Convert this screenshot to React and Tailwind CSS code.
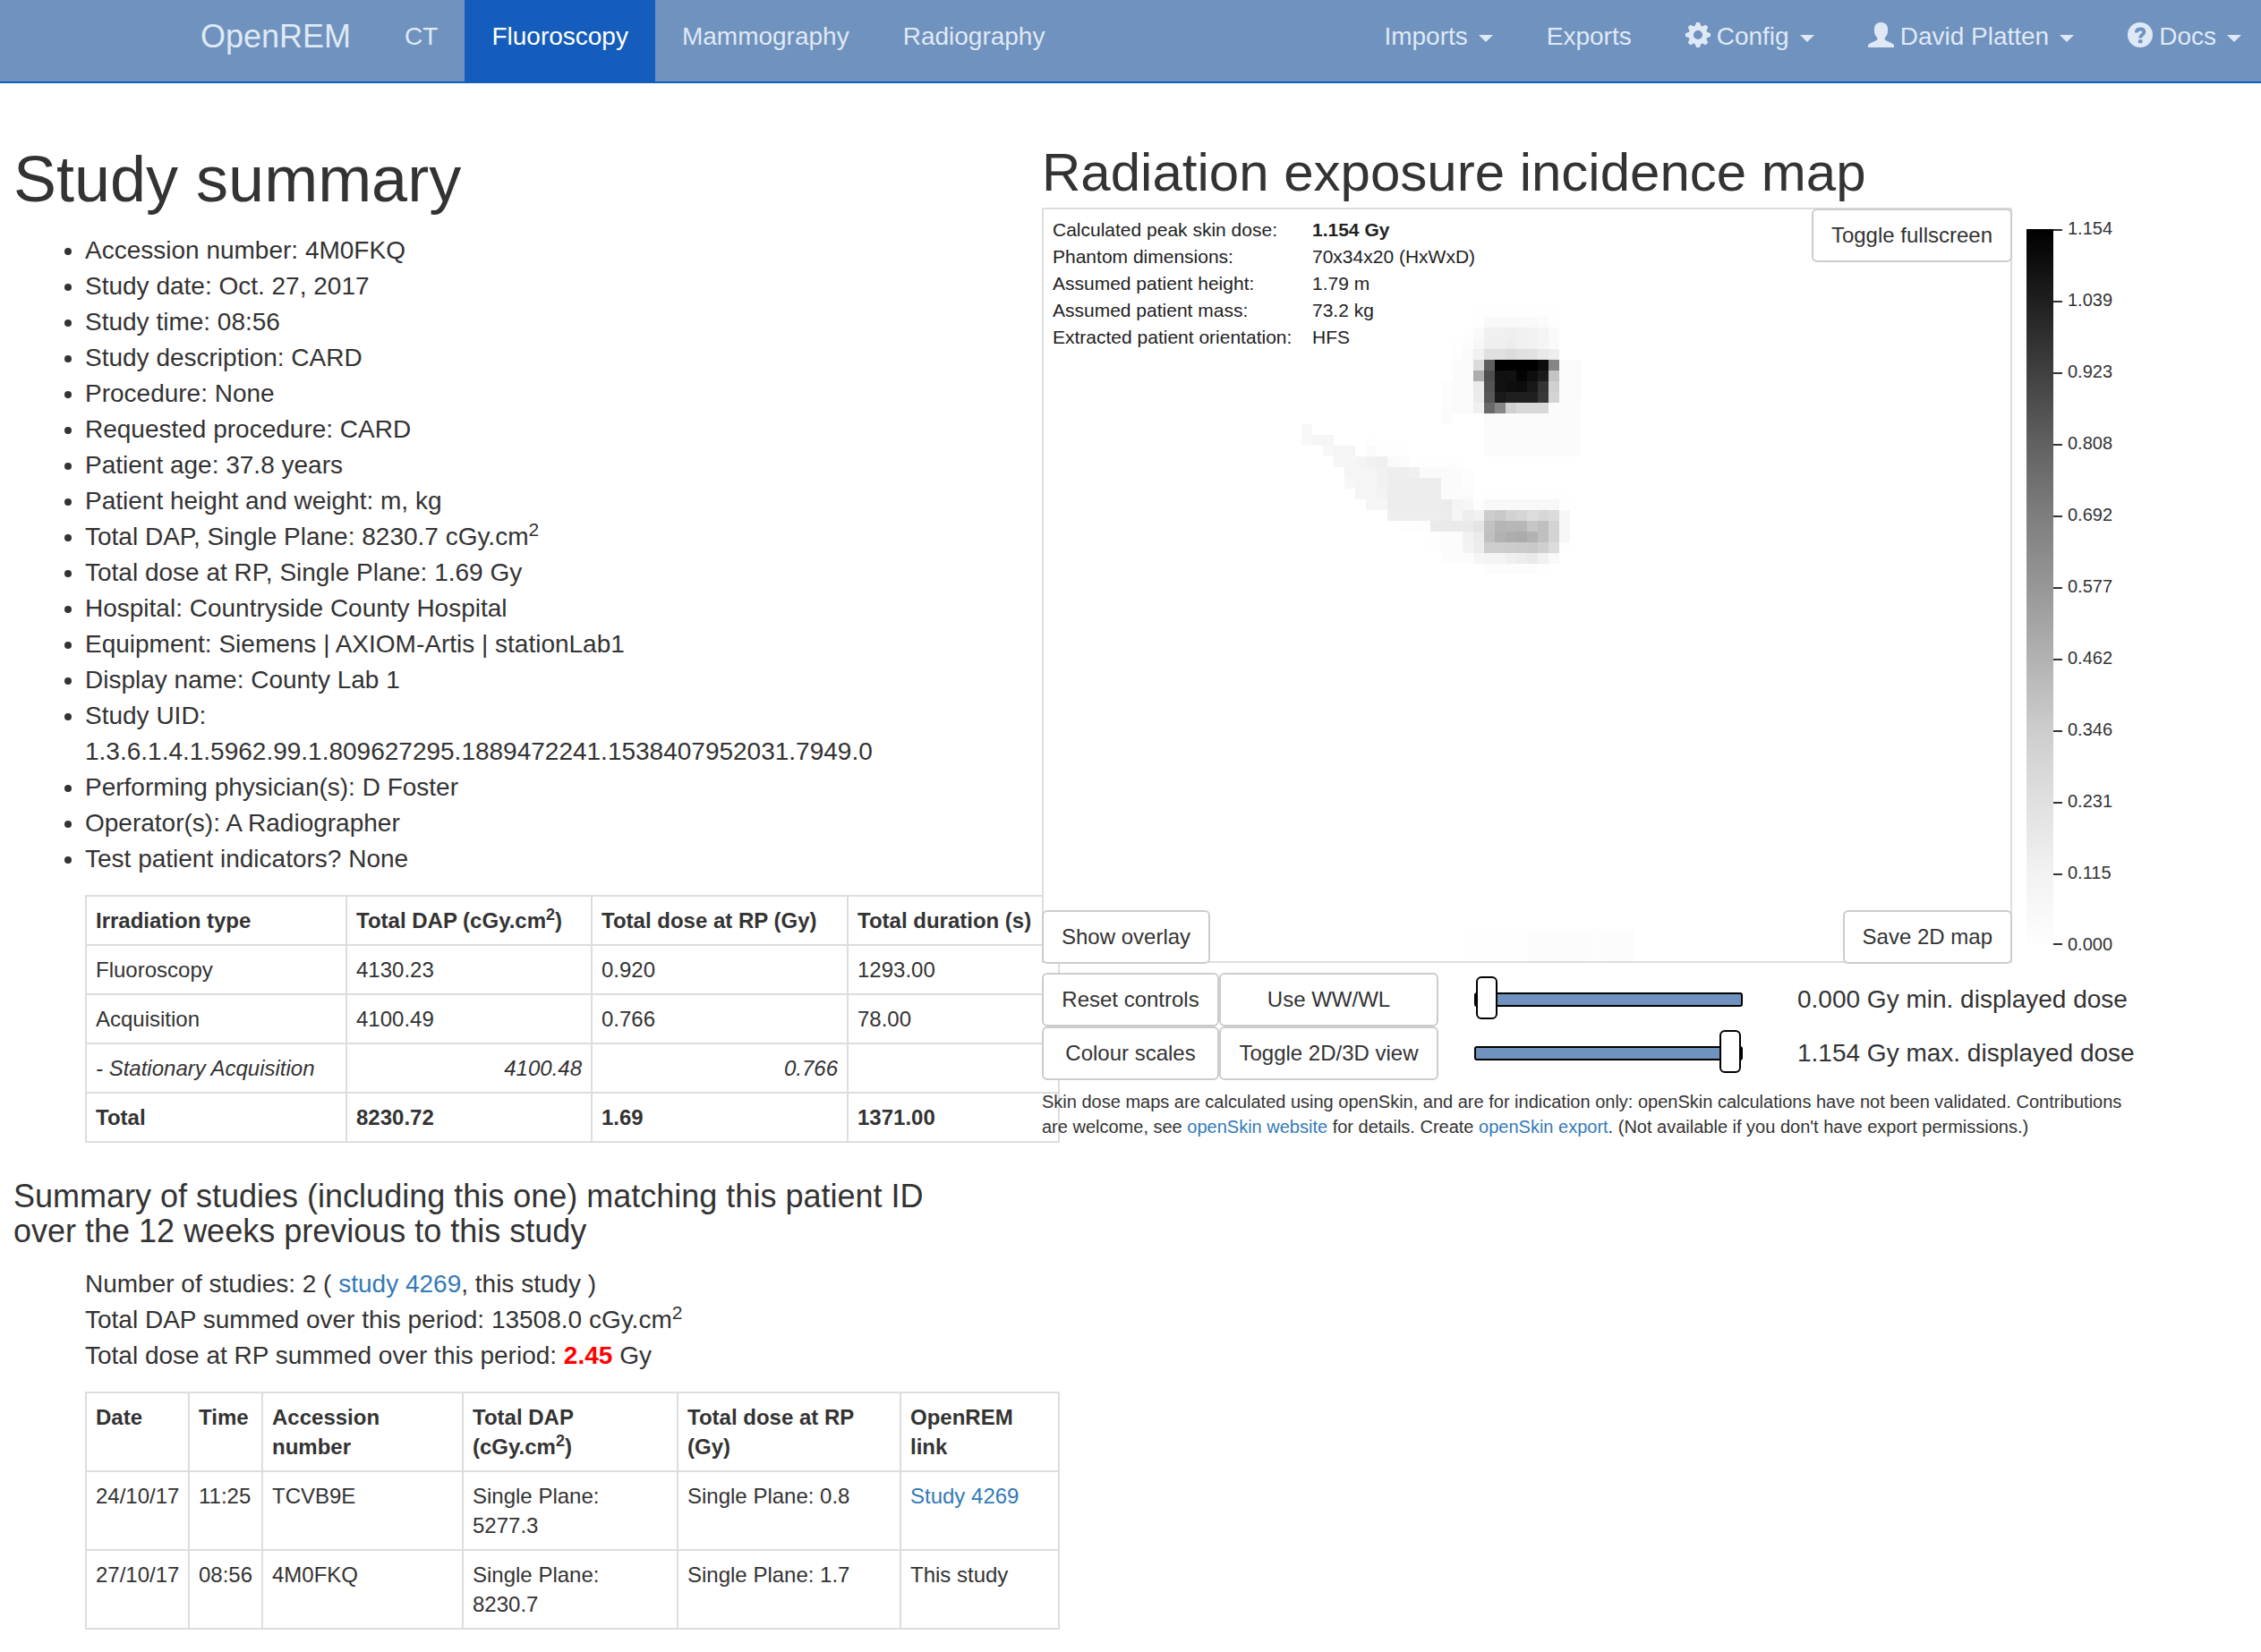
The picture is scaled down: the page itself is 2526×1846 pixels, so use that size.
import React, { useState } from "react";

const IRRADIATION_ROWS = [
  ["Fluoroscopy", "4130.23", "0.920", "1293.00"],
  ["Acquisition", "4100.49", "0.766", "78.00"],
];

const SCALE_TICKS = ["1.154", "1.039", "0.923", "0.808", "0.692", "0.577", "0.462", "0.346", "0.231", "0.115", "0.000"];
const SCALE_GREYS = ["#000000", "#1f1f1f", "#404040", "#616161", "#7e7e7e", "#979797", "#b2b2b2", "#cdcdcd", "#e0e0e0", "#f2f2f2", "#fefefe"];

// Dose cells of the skin map: row, first column, then one grey level per cell.
const DOSE_CELLS = [
  [9, 40, "fe fe fe fe fe fe fe fe"],
  [10, 40, "fe f9 f9 f9 f9 f9 fb fe"],
  [11, 39, "fe fa f0 f0 ef f0 f2 f4 fa"],
  [12, 38, "fe fd f7 ef ef ed f0 f2 f5 fa"],
  [13, 38, "fe fa f1 e0 e0 db e0 e2 e9 ee"],
  [14, 38, "fb fa db 5e 00 00 00 00 0c 85 fa fa"],
  [15, 38, "fb fa ad 4e 10 11 04 0e 1b c4 fa fa"],
  [16, 37, "fc fb fa ea 53 11 0e 0d 18 34 d0 fa fa"],
  [17, 37, "fc fb fa eb 58 19 1f 1f 1f 38 d4 fa fa"],
  [18, 37, "fc fb fa f0 69 86 d0 d8 d8 d8 fb fb fb"],
  [19, 37, "fb"],
  [19, 41, "fa fb fb fb fb fb fb fb fb"],
  [20, 24, "f8"],
  [20, 41, "fb fb fb fb fb fb fb fb fb"],
  [21, 24, "f8 f6 f6"],
  [21, 30, "fe"],
  [21, 41, "fb fb fb fb fb fb fb fb fb"],
  [22, 26, "f7 f5 f5"],
  [22, 30, "fb fe fe fe"],
  [22, 41, "fb fb fb fb fb fb fb fb fb"],
  [23, 27, "f6 f6 f4 f1 ef fa fb fe fe fe fe fe"],
  [24, 28, "f5 f5 f5 f1 ee ee f0 fa fa fb fb fd"],
  [25, 28, "f7 f5 f5 f1 ed ed ed ed ed fb fb fd"],
  [26, 29, "f5 f5 f3 ed ed ed ed ed fb fb fb"],
  [26, 41, "fe fe fe fe fe fe fe fe"],
  [27, 30, "f6 f6 ed ed ed ed ed eb f4 f6 fd f8 f8 f8 f8 f8 f8 f8 fe"],
  [28, 32, "ee ee ee ee ee ec f5 ee f1 cd c8 d2 d5 dc d7 db f7"],
  [29, 33, "fe fe fd ea ea ea ea e4 c2 b5 b7 b7 c6 bf d3 f7"],
  [30, 36, "fe fc fc f2 eb c0 b2 ad ab b2 c0 d3 f7"],
  [31, 36, "fe fc fc f3 ed cd cd cc cb c9 cf dc fe"],
  [32, 37, "fc fc fc f6 f4 f4 f0 ed ea f1 f9"],
  [33, 41, "fc fc fc fc fc fe"],
  [67, 39, "fe fe fe fe fe fe fc fc fc fc fc fc fd fc fc fc"],
  [68, 39, "fe fe fe fe fe fe fc fc fc fc fc fc fd fc fc fc"],
  [69, 39, "fe fe fe fe fe fe fc fc fc fc fc fc fd fc fc fc"],
];

const MAP_INFO = [
  ["Phantom dimensions:", "70x34x20 (HxWxD)"],
  ["Assumed patient height:", "1.79 m"],
  ["Assumed patient mass:", "73.2 kg"],
  ["Extracted patient orientation:", "HFS"],
];

const LINK = "text-[#337ab7]";
const BUTTON = "h-[60px] rounded-md border-2 border-[#ccc] bg-white px-5 text-[24px] leading-9 whitespace-nowrap";
const CELL = "border-2 border-[#ddd] p-[10px] text-left align-top";
const SLIDER =
  "w-[300px] appearance-none bg-transparent " +
  "[&::-webkit-slider-runnable-track]:h-4 [&::-webkit-slider-runnable-track]:rounded-[3px] [&::-webkit-slider-runnable-track]:border-2 [&::-webkit-slider-runnable-track]:border-black [&::-webkit-slider-runnable-track]:bg-[#7092be] " +
  "[&::-webkit-slider-thumb]:-mt-5 [&::-webkit-slider-thumb]:h-12 [&::-webkit-slider-thumb]:w-6 [&::-webkit-slider-thumb]:appearance-none [&::-webkit-slider-thumb]:rounded-md [&::-webkit-slider-thumb]:border-2 [&::-webkit-slider-thumb]:border-black [&::-webkit-slider-thumb]:bg-white";

function CogIcon() {
  return (
    <svg viewBox="-14 -14 28 28" className="mr-[7px] mb-1 size-7" fill="currentColor" aria-hidden="true">
      <circle r="7.8" fill="none" stroke="currentColor" strokeWidth="5.4" />
      {[0, 45, 90, 135, 180, 225, 270, 315].map((a) => (
        <path key={a} d="M-3.6-9.4 -1.8-14H1.8L3.6-9.4Z" transform={`rotate(${a})`} />
      ))}
    </svg>
  );
}

function UserIcon() {
  return (
    <svg viewBox="0 0 29 28" className="mr-[7px] mb-1 h-7 w-[29px]" fill="currentColor" aria-hidden="true">
      <path d="M14.5 0C10.5 0 7 2.500 7 7v3c0 3 1.300 5.500 3.400 7.300 0 1.700-.3 2.500-1.400 3L2.500 23.300C.8 24.200 0 25 0 26.200V28h29v-1.800c0-1.200-.8-2-2.500-2.900L20 20.300c-1.100-.5-1.400-1.300-1.400-3C20.700 15.500 22 13 22 10V7c0-4.500-3.500-7-7.500-7Z" />
    </svg>
  );
}

function HelpIcon() {
  return (
    <svg viewBox="0 0 28 28" className="mr-[7px] mb-1 size-7" aria-hidden="true">
      <circle cx="14" cy="14" r="14" fill="currentColor" />
      <path d="M9.800 11.600c0-2.800 1.600-4.100 4.300-4.100 2.600 0 4.300 1.200 4.300 3.300 0 3-4.200 2.900-4.200 6.600" fill="none" stroke="#7092be" strokeWidth="3.800" />
      <rect x="12" y="19.300" width="4.400" height="3.900" fill="#7092be" />
    </svg>
  );
}

function NavMenu({ icon, label }) {
  return (
    <button type="button" className="flex items-center px-[30px] pt-[21px] pb-[30px]">
      {icon}
      {label}
      <span className="mt-1 ml-3 border-x-8 border-t-8 border-x-transparent border-t-current" />
    </button>
  );
}

function NavLink({ active, children }) {
  return (
    <a href="#" className={active ? "bg-[#155dbd] px-[30px] pt-[21px] pb-[30px] text-white" : "px-[30px] pt-[21px] pb-[30px]"}>
      {children}
    </a>
  );
}

function Navbar() {
  return (
    <nav className="flex border-b-2 border-[#155dbd] bg-[#7092be] pl-[194px] whitespace-nowrap text-[#dfe9f6]">
      <a href="#" className="px-[30px] pt-[21px] text-[36px]">OpenREM</a>
      <NavLink>CT</NavLink>
      <NavLink active>Fluoroscopy</NavLink>
      <NavLink>Mammography</NavLink>
      <NavLink>Radiography</NavLink>
      <div className="-mr-2 ml-auto flex">
        <NavMenu label="Imports" />
        <NavLink>Exports</NavLink>
        <NavMenu icon={<CogIcon />} label="Config" />
        <NavMenu icon={<UserIcon />} label="David Platten" />
        <NavMenu icon={<HelpIcon />} label="Docs" />
      </div>
    </nav>
  );
}

function Sup() {
  return <sup className="relative -top-[0.5em] align-baseline text-[75%] leading-none">2</sup>;
}

function StudySummary() {
  return (
    <section className="pr-20 pl-[15px]">
      <h1 className="mb-5 text-[72px] leading-[80px]">Study summary</h1>
      <ul className="mb-5 list-disc pl-20">
        <li>Accession number: 4M0FKQ</li>
        <li>Study date: Oct. 27, 2017</li>
        <li>Study time: 08:56</li>
        <li>Study description: CARD</li>
        <li>Procedure: None</li>
        <li>Requested procedure: CARD</li>
        <li>Patient age: 37.8 years</li>
        <li>Patient height and weight: m, kg</li>
        <li>Total DAP, Single Plane: 8230.7 cGy.cm<Sup /></li>
        <li>Total dose at RP, Single Plane: 1.69 Gy</li>
        <li>Hospital: Countryside County Hospital</li>
        <li>Equipment: Siemens | AXIOM-Artis | stationLab1</li>
        <li>Display name: County Lab 1</li>
        <li>Study UID: 1.3.6.1.4.1.5962.99.1.809627295.1889472241.1538407952031.7949.0</li>
        <li>Performing physician(s): D Foster</li>
        <li>Operator(s): A Radiographer</li>
        <li>Test patient indicators? None</li>
      </ul>

      <table className="mb-10 ml-20 w-[1089px] table-fixed border-collapse text-[24px] leading-[33px]">
        <colgroup>
          <col className="w-[291px]" />
          <col className="w-[274px]" />
          <col className="w-[286px]" />
          <col />
        </colgroup>
        <thead>
          <tr>
            <th className={CELL}>Irradiation type</th>
            <th className={CELL}>Total DAP (cGy.cm<Sup />)</th>
            <th className={CELL}>Total dose at RP (Gy)</th>
            <th className={`${CELL} whitespace-nowrap`}>Total duration (s)</th>
          </tr>
        </thead>
        <tbody>
          {IRRADIATION_ROWS.map((row) => (
            <tr key={row[0]}>
              {row.map((v) => (
                <td key={v} className={CELL}>{v}</td>
              ))}
            </tr>
          ))}
          <tr className="italic">
            <td className={CELL}>- Stationary Acquisition</td>
            <td className="border-2 border-[#ddd] p-[10px] text-right">4100.48</td>
            <td className="border-2 border-[#ddd] p-[10px] text-right">0.766</td>
            <td className={CELL} />
          </tr>
          <tr>
            <th className={CELL}>Total</th>
            <th className={CELL}>8230.72</th>
            <th className={CELL}>1.69</th>
            <th className={CELL}>1371.00</th>
          </tr>
        </tbody>
      </table>

      <h2 className="mb-5 text-[36px] leading-[39px]">
        Summary of studies (including this one) matching this patient ID over the 12 weeks previous to this study
      </h2>
      <div className="mb-5 pl-20">
        <p>Number of studies: 2 ( <a href="#" className={LINK}>study 4269</a>, this study )</p>
        <p>Total DAP summed over this period: 13508.0 cGy.cm<Sup /></p>
        <p>Total dose at RP summed over this period: <strong className="text-[#f00]">2.45</strong> Gy</p>
      </div>

      <table className="ml-20 w-[1089px] table-fixed border-collapse text-[24px] leading-[33px]">
        <colgroup>
          <col className="w-[115px]" />
          <col className="w-[82px]" />
          <col className="w-[224px]" />
          <col className="w-[240px]" />
          <col className="w-[249px]" />
          <col />
        </colgroup>
        <thead>
          <tr>
            <th className={CELL}>Date</th>
            <th className={CELL}>Time</th>
            <th className={CELL}>Accession<br />number</th>
            <th className={CELL}>Total DAP (cGy.cm<Sup />)</th>
            <th className={CELL}>Total dose at RP (Gy)</th>
            <th className={CELL}>OpenREM link</th>
          </tr>
        </thead>
        <tbody>
          <tr>
            <td className={CELL}>24/10/17</td>
            <td className={CELL}>11:25</td>
            <td className={CELL}>TCVB9E</td>
            <td className={CELL}>Single Plane:<br />5277.3</td>
            <td className={CELL}>Single Plane: 0.8</td>
            <td className={CELL}><a href="#" className={LINK}>Study 4269</a></td>
          </tr>
          <tr>
            <td className={CELL}>27/10/17</td>
            <td className={CELL}>08:56</td>
            <td className={CELL}>4M0FKQ</td>
            <td className={CELL}>Single Plane:<br />8230.7</td>
            <td className={CELL}>Single Plane: 1.7</td>
            <td className={CELL}>This study</td>
          </tr>
        </tbody>
      </table>
    </section>
  );
}

function SkinMap() {
  return (
    <div className="relative border-2 border-[#ddd] bg-white">
      <svg viewBox="0 0 90 70" className="block h-[840px] w-[1080px]" shapeRendering="crispEdges" role="img" aria-label="Skin dose map">
        {DOSE_CELLS.map(([row, col, greys]) =>
          greys.split(" ").map((g, i) => (
            <rect key={`${row}-${col + i}`} x={col + i} y={row} width="1" height="1" fill={`#${g}${g}${g}`} />
          ))
        )}
      </svg>
      <dl className="absolute top-2 left-[10px] grid grid-cols-[290px_auto] text-[21px] leading-[30px] text-[#222]">
        <dt>Calculated peak skin dose:</dt>
        <dd className="font-bold">1.154 Gy</dd>
        {MAP_INFO.map(([label, value]) => (
          <React.Fragment key={label}>
            <dt>{label}</dt>
            <dd>{value}</dd>
          </React.Fragment>
        ))}
      </dl>
      <button type="button" className={`${BUTTON} absolute -top-px -right-0.5`}>Toggle fullscreen</button>
      <button type="button" className={`${BUTTON} absolute -bottom-[3px] -left-0.5`}>Show overlay</button>
      <button type="button" className={`${BUTTON} absolute -right-0.5 -bottom-[3px]`}>Save 2D map</button>
    </div>
  );
}

function ColourScale() {
  return (
    <svg viewBox="0 0 110 844" className="h-[844px] w-[110px] shrink-0" role="img" aria-label="Dose scale in Gy">
      <defs>
        <linearGradient id="dose" x1="0" y1="0" x2="0" y2="1">
          {SCALE_GREYS.map((c, i) => (
            <stop key={c} offset={i / 10} stopColor={c} />
          ))}
        </linearGradient>
      </defs>
      <rect x="0" y="24" width="30" height="800" fill="url(#dose)" />
      {SCALE_TICKS.map((t, i) => (
        <g key={t} fill="#333">
          <rect x="30" y={24 + 80 * i - (i === 10 ? 2 : 0)} width="10" height="2" />
          <text x="46" y={30 + 80 * i} fontSize="20">{t}</text>
        </g>
      ))}
    </svg>
  );
}

function ExposureMap() {
  const [min, setMin] = useState(0);
  const [max, setMax] = useState(1.154);
  return (
    <section className="relative">
      <h2 className="mb-1.5 text-[60px] leading-[66px]">Radiation exposure incidence map</h2>
      <div className="mb-[11px] flex gap-4">
        <SkinMap />
        <ColourScale />
      </div>
      <div className="flex">
        <div className="grid grid-cols-[198px_245px]">
          <button type="button" className={BUTTON}>Reset controls</button>
          <button type="button" className={BUTTON}>Use WW/WL</button>
          <button type="button" className={BUTTON}>Colour scales</button>
          <button type="button" className={BUTTON}>Toggle 2D/3D view</button>
        </div>
        <div className="ml-10 grid grid-cols-[361px_auto] grid-rows-[60px_60px] items-center whitespace-nowrap">
          <input id="min-dose" type="range" min="0" max="1.154" step="0.001" value={min} onChange={(e) => setMin(Number(e.target.value))} className={SLIDER} />
          <label htmlFor="min-dose">{min.toFixed(3)} Gy min. displayed dose</label>
          <input id="max-dose" type="range" min="0" max="1.154" step="0.001" value={max} onChange={(e) => setMax(Number(e.target.value))} className={SLIDER} />
          <label htmlFor="max-dose">{max.toFixed(3)} Gy max. displayed dose</label>
        </div>
      </div>
      <p className="mt-[10px] mr-[140px] text-[20px] leading-7">
        Skin dose maps are calculated using openSkin, and are for indication only: openSkin calculations have not been
        validated. Contributions are welcome, see <a href="#" className={LINK}>openSkin website</a> for details. Create{" "}
        <a href="#" className={LINK}>openSkin export</a>. (Not available if you don't have export permissions.)
      </p>
    </section>
  );
}

export default function App() {
  return (
    <div className="min-h-screen overflow-x-hidden bg-white font-['Liberation_Sans',Arial,sans-serif] text-[28px] leading-10 text-[#333]">
      <Navbar />
      <main className="grid grid-cols-[minmax(0,1164fr)_minmax(0,1362fr)] pt-[67px]">
        <StudySummary />
        <ExposureMap />
      </main>
    </div>
  );
}
